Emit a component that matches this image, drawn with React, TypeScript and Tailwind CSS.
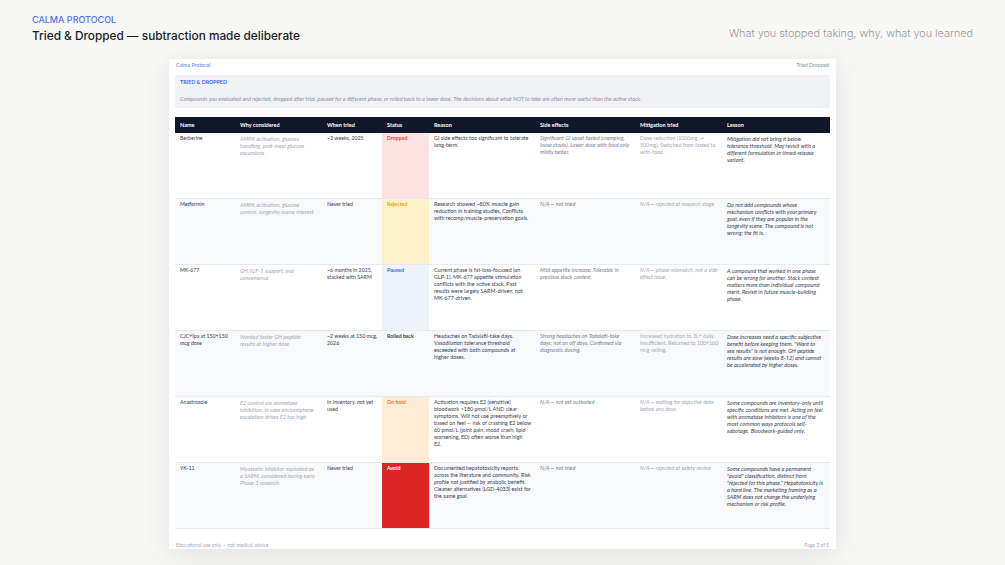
import React from "react";

type Row = {
  name: string;
  why: string;
  when: string;
  status: string;
  statusCls: string;
  reason: string;
  side: React.ReactNode;
  mitigation: React.ReactNode;
  lesson: string;
};

const rows: Row[] = [
  {
    name: "Berberine",
    why: "AMPK activation, glucose handling, post-meal glucose excursions",
    when: "~3 weeks, 2025",
    status: "Dropped",
    statusCls: "bg-[#fde2e2] text-[#ef4444]",
    reason: "GI side effects too significant to tolerate long-term.",
    side: "Significant GI upset fasted (cramping, loose stools). Lower dose with food only mildly better.",
    mitigation: (
      <span className="not-italic text-[5.25px]">Dose reduction (1000mg → 500mg). Switched from fasted to with-food.</span>
    ),
    lesson:
      "Mitigation did not bring it below tolerance threshold. May revisit with a different formulation or timed-release variant.",
  },
  {
    name: "Metformin",
    why: "AMPK activation, glucose control, longevity-scene interest",
    when: "Never tried",
    status: "Rejected",
    statusCls: "bg-[#fdf1c7] text-[#e8a317]",
    reason: "Research showed ~80% muscle gain reduction in training studies. Conflicts with recomp/muscle-preservation goals.",
    side: "N/A — not tried",
    mitigation: "N/A — rejected at research stage",
    lesson:
      "Do not add compounds whose mechanism conflicts with your primary goal, even if they are popular in the longevity scene. The compound is not wrong; the fit is.",
  },
  {
    name: "MK-677",
    why: "GH/IGF-1 support, oral convenience",
    when: "~6 months in 2025, stacked with SARM",
    status: "Paused",
    statusCls: "bg-[#eef2fb] text-[#3b6cf0]",
    reason:
      "Current phase is fat-loss-focused (on GLP-1). MK-677 appetite stimulation conflicts with the active stack. Past results were largely SARM-driven, not MK-677-driven.",
    side: "Mild appetite increase. Tolerable in previous stack context.",
    mitigation: "N/A — phase mismatch, not a side-effect issue.",
    lesson:
      "A compound that worked in one phase can be wrong for another. Stack context matters more than individual compound merit. Revisit in future muscle-building phase.",
  },
  {
    name: "CJC+Ipa at 150+150 mcg dose",
    why: "Wanted faster GH peptide results at higher dose",
    when: "~2 weeks at 150 mcg, 2026",
    status: "Rolled back",
    statusCls: "text-[#374151]",
    reason:
      "Headaches on Tadalafil-take days. Vasodilation tolerance threshold exceeded with both compounds at higher doses.",
    side: "Strong headaches on Tadalafil-take days; not on off days. Confirmed via diagnostic dosing.",
    mitigation: (
      <span className="not-italic text-[5.25px]">
        Increased hydration to 3L+ daily. Insufficient. Returned to 100+100 mcg ceiling.
      </span>
    ),
    lesson:
      'Dose increases need a specific subjective benefit before keeping them. "Want to see results" is not enough. GH peptide results are slow (weeks 8-12) and cannot be accelerated by higher doses.',
  },
  {
    name: "Anastrozole",
    why: "E2 control via aromatase inhibition, in case enclomiphene escalation drives E2 too high",
    when: "In inventory, not yet used",
    status: "On hold",
    statusCls: "bg-[#ffecd5] text-[#f97316]",
    reason:
      "Activation requires E2 (sensitive) bloodwork >180 pmol/L AND clear symptoms. Will not use preemptively or based on feel — risk of crashing E2 below 60 pmol/L (joint pain, mood crash, lipid worsening, ED) often worse than high E2.",
    side: "N/A — not yet activated",
    mitigation: "N/A — waiting for objective data before any dose",
    lesson:
      "Some compounds are inventory-only until specific conditions are met. Acting on feel with aromatase inhibitors is one of the most common ways protocols self-sabotage. Bloodwork-guided only.",
  },
  {
    name: "YK-11",
    why: "Myostatin inhibitor marketed as a SARM, considered during early Phase 3 research",
    when: "Never tried",
    status: "Avoid",
    statusCls: "bg-[#dc2626] text-white",
    reason:
      "Documented hepatotoxicity reports across the literature and community. Risk profile not justified by anabolic benefit. Cleaner alternatives (LGD-4033) exist for the same goal.",
    side: "N/A — not tried",
    mitigation: "N/A — rejected at safety review",
    lesson:
      'Some compounds have a permanent "avoid" classification, distinct from "rejected for this phase." Hepatotoxicity is a hard line. The marketing framing as a SARM does not change the underlying mechanism or risk profile.',
  },
];

const heads = ["Name", "Why considered", "When tried", "Status", "Reason", "Side effects", "Mitigation tried", "Lesson"];

const cols = "grid grid-cols-[60px_87px_60px_47px_106px_100px_87px_106px]";

export default function App() {
  return (
    <div className="min-h-screen bg-[#f7f7f5] font-['Inter',sans-serif]">
      <header className="flex items-end justify-between px-8 pt-[13px]">
        <div>
          <div className="text-[9px] leading-[14px] font-medium uppercase text-[#5470e8]">Calma Protocol</div>
          <h1 className="text-[11.8px] leading-[18px] font-medium text-[#1b1b1f]">
            Tried &amp; Dropped — subtraction made deliberate
          </h1>
        </div>
        <div className="pb-[2px] text-[10.8px] leading-[18px] font-light text-[#9a9aa0]">
          What you stopped taking, why, what you learned
        </div>
      </header>

      <div className="mx-auto mt-[14px] h-[490px] w-[667px] bg-white px-[6px] shadow-[0_6px_26px_rgba(0,0,0,0.09)] font-['Lato',sans-serif]">
        <div className="flex h-[9px] items-end justify-between px-[1px] text-[5.2px] leading-[6px] text-[#5b7be8]">
          <span>Calma Protocol</span>
          <span className="text-[#8a93a6]">Tried Dropped</span>
        </div>

        <div className="mt-[7px] h-[33px] bg-[#f1f2f6] px-[5px] pt-[4px]">
          <div className="text-[5.3px] leading-[6px] font-bold uppercase text-[#3b6cf0]">Tried &amp; Dropped</div>
          <div className="mt-[11px] text-[5.55px] leading-[6px] italic text-[#8a90a0]">
            Compounds you evaluated and rejected, dropped after trial, paused for a different phase, or rolled back to a
            lower dose. The decisions about what NOT to take are often more useful than the active stack.
          </div>
        </div>

        <div className="mt-[9px]">
          <div className={`${cols} h-[16px] items-center bg-[#0f172a] text-[5.5px] font-bold text-white`}>
            {heads.map((h) => (
              <div key={h} className="px-[5px]">
                {h}
              </div>
            ))}
          </div>

          {rows.map((r, i) => (
            <div
              key={r.name}
              className={`${cols} h-[66px] border-b border-[#e6e9f0] text-[5.25px] leading-[7px] ${
                i % 2 === 1 ? "bg-[#f8f9fb]" : "bg-white"
              }`}
            >
              <div className="px-[5px] pt-[2px] text-[#374151]">{r.name}</div>
              <div className="px-[5px] pt-[2px] text-[5.6px] italic text-[#a3a8b4]">{r.why}</div>
              <div className="pl-[5px] pr-[2px] pt-[2px] text-[#374151]">{r.when}</div>
              <div className={`px-[5px] pt-[2px] font-bold ${r.statusCls}`}>{r.status}</div>
              <div className="pl-[5px] pr-[4px] pt-[2px] text-[5.38px] text-[#374151]">{r.reason}</div>
              <div className="px-[5px] pt-[2px] text-[5.5px] italic text-[#7b8190]">{r.side}</div>
              <div className="pl-[5px] pr-[2px] pt-[2px] text-[5.5px] italic text-[#a3a8b4]">{r.mitigation}</div>
              <div className="px-[5px] pt-[2px] text-[5.6px] italic text-[#374151]">{r.lesson}</div>
            </div>
          ))}
        </div>

        <div className="mt-[13px] flex justify-between px-[1px] text-[5px] leading-[6px] text-[#a3a8b4]">
          <span>Educational use only — not medical advice</span>
          <span>Page 3 of 5</span>
        </div>
      </div>
    </div>
  );
}
